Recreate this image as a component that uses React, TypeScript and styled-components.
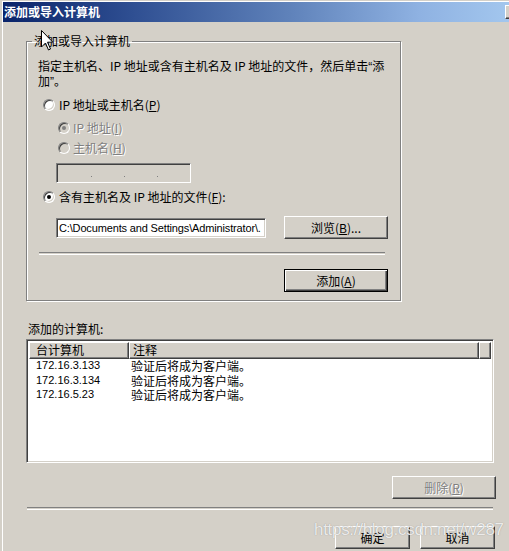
import React from "react";
import styled, { createGlobalStyle, css } from "styled-components";

const GlobalStyle = createGlobalStyle`
  html, body { margin: 0; padding: 0; background: #d4d0c8; overflow: hidden; }
  body { width: 509px; height: 551px; }
`;

const CJK = `"Noto Sans CJK SC", "Liberation Sans", sans-serif`;
const LAT = `"Liberation Sans", "Noto Sans CJK SC", sans-serif`;

const Window = styled.div`
  position: relative;
  width: 524px;
  height: 551px;
  box-sizing: border-box;
  background: #d4d0c8;
  border-top: 1px solid #d4d0c8;
  border-left: 2px solid #d4d0c8;
  box-shadow: inset 1px 1px 0 #ffffff;
  padding: 1px 0 0 1px;
  display: flex;
  flex-direction: column;
  font-family: ${CJK};
  font-size: 12px;
  color: #000;
`;

const TitleBar = styled.div`
  height: 20px;
  display: flex;
  align-items: center;
  justify-content: space-between;
  background: linear-gradient(to right, #0a246a 0%, #2f4f92 25%, #5f82ba 55%, #8fb2e2 80%, #a6caf0 100%);
`;

const TitleText = styled.span`
  padding-left: 1px;
  color: #fff;
  font-weight: bold;
  font-size: 12px;
  line-height: 14px;
`;

const CloseButton = styled.span`
  width: 16px;
  height: 14px;
  margin-right: 3px;
  box-sizing: border-box;
  background: #d4d0c8;
  border: 1px solid;
  border-color: #fff #404040 #404040 #fff;
  box-shadow: inset -1px -1px 0 #808080;
  display: flex;
  align-items: center;
  justify-content: center;
`;

const Content = styled.div`
  display: flex;
  flex-direction: column;
  align-items: flex-start;
  padding-left: 23px;
  width: 470px;
`;

const Group = styled.fieldset`
  margin: 12px 0 0 0;
  width: 375px;
  min-width: 0;
  box-sizing: border-box;
  border: 1px solid #808080;
  box-shadow: 1px 1px 0 #fff, inset 1px 1px 0 #fff;
  padding: 10px 12px 8px 11px;
  display: flex;
  flex-direction: column;
  align-items: flex-start;
`;

const Legend = styled.legend`
  padding: 0 2px;
  margin-left: -6px;
  line-height: 14px;
  font-size: 12px;
`;

const Desc = styled.div`
  line-height: 15px;
  height: 30px;
  white-space: nowrap;
`;

const Quote = styled.span`
  font-family: ${LAT};
  line-height: 0;
`;

const RadioRow = styled.label<{ $indent: number; $top: number; $gap: number }>`
  display: flex;
  align-items: center;
  height: 20px;
  gap: ${(p) => p.$gap}px;
  margin-left: ${(p) => p.$indent}px;
  margin-top: ${(p) => p.$top}px;
  white-space: nowrap;
  line-height: 14px;
`;

const RadioCircle = styled.span<{ $disabled?: boolean; $checked?: boolean }>`
  width: 12px;
  height: 12px;
  flex: none;
  box-sizing: border-box;
  border-radius: 50%;
  border: 1px solid;
  border-color: #808080 #fff #fff #808080;
  box-shadow: inset 1px 1px 0 #404040, inset -1px -1px 0 #d4d0c8;
  background: ${(p) => (p.$disabled ? "#d4d0c8" : "#fff")};
  display: flex;
  align-items: center;
  justify-content: center;
  &::after {
    content: "";
    width: 4px;
    height: 4px;
    border-radius: 50%;
    background: ${(p) => (p.$disabled ? "#808080" : "#000")};
    display: ${(p) => (p.$checked ? "block" : "none")};
  }
`;

const disabledText = css`
  color: #808080;
  text-shadow: 1px 1px 0 #fff;
`;

const Label = styled.span<{ $disabled?: boolean }>`
  ${(p) => p.$disabled && disabledText}
`;

const sunken = css`
  box-sizing: border-box;
  border: 1px solid;
  border-color: #808080 #fff #fff #808080;
  box-shadow: inset 1px 1px 0 #404040, inset -1px -1px 0 #d4d0c8;
`;

const IpBox = styled.div`
  ${sunken};
  width: 135px;
  height: 20px;
  margin: 5px 0 0 18px;
  background: #d4d0c8;
  display: flex;
  align-items: center;
  padding-left: 2px;
`;

const IpSegment = styled.span`
  width: 32px;
  height: 100%;
`;

const IpDot = styled.span`
  width: 1px;
  height: 1px;
  margin-top: 6px;
  background: #808080;
`;

const PathRow = styled.div`
  display: flex;
  align-items: center;
  margin: 9px 0 0 18px;
  gap: 18px;
`;

const PathInput = styled.div`
  ${sunken};
  width: 210px;
  height: 20px;
  background: #fff;
  font-family: ${LAT};
  font-size: 11px;
  letter-spacing: -0.15px;
  line-height: 16px;
  padding: 1px 0 0 2px;
  white-space: nowrap;
  overflow: hidden;
`;

const Button = styled.button<{ $w: number; $default?: boolean; $disabled?: boolean }>`
  width: ${(p) => p.$w}px;
  height: 23px;
  box-sizing: border-box;
  padding: 0;
  margin: 0;
  background: #d4d0c8;
  font-family: ${CJK};
  font-size: 12px;
  line-height: 14px;
  color: #000;
  border: 1px solid;
  border-color: #fff #404040 #404040 #fff;
  box-shadow: inset -1px -1px 0 #808080;
  ${(p) =>
    p.$default &&
    css`
      border-color: #000;
      box-shadow: inset 1px 1px 0 #fff, inset -1px -1px 0 #404040, inset -2px -2px 0 #808080;
    `}
  ${(p) => p.$disabled && disabledText}
`;

const Separator = styled.div<{ $w: number; $top: number; $left: number }>`
  width: ${(p) => p.$w}px;
  height: 1px;
  margin-top: ${(p) => p.$top}px;
  margin-left: ${(p) => p.$left}px;
  border-top: 1px solid #808080;
  border-bottom: 1px solid #fff;
`;

const ButtonRow = styled.div<{ $top: number; $right: number; $gap?: number }>`
  align-self: stretch;
  display: flex;
  justify-content: flex-end;
  gap: ${(p) => p.$gap ?? 0}px;
  margin-top: ${(p) => p.$top}px;
  margin-right: ${(p) => p.$right}px;
`;

const ListLabel = styled.div`
  margin: 20px 0 0 2px;
  line-height: 15px;
`;

const ListView = styled.div`
  ${sunken};
  margin-top: 3px;
  width: 468px;
  height: 124px;
  background: #fff;
  padding: 2px;
  display: flex;
  flex-direction: column;
`;

const HeaderRow = styled.div`
  display: flex;
  height: 17px;
  flex: none;
`;

const HeaderCell = styled.div<{ $w?: number; $pad: number }>`
  ${(p) => (p.$w ? `width: ${p.$w}px;` : "flex: 1;")}
  box-sizing: border-box;
  background: #d4d0c8;
  border: 1px solid;
  border-color: #fff #404040 #404040 #fff;
  box-shadow: inset -1px -1px 0 #808080;
  padding-left: ${(p) => p.$pad}px;
  line-height: 14px;
  white-space: nowrap;
  overflow: hidden;
`;

const Rows = styled.div`
  display: flex;
  flex-direction: column;
`;

const Row = styled.div`
  display: flex;
  height: 14.5px;
  line-height: 13px;
  align-items: flex-start;
  white-space: nowrap;
`;

const IpCell = styled.span`
  width: 100px;
  padding-left: 7px;
  box-sizing: border-box;
  font-family: ${LAT};
  font-size: 11px;
`;

const NoteCell = styled.span`
  padding-left: 2px;
  font-size: 12px;
`;

const Cursor = styled.svg`
  position: absolute;
  left: 39px;
  top: 29px;
`;

const Watermark = styled.div`
  position: absolute;
  left: 312px;
  top: 519px;
  font-family: ${LAT};
  font-size: 17px;
  letter-spacing: -0.3px;
  color: rgba(255, 255, 255, 0.82);
  text-shadow: 0 0 1px rgba(90, 90, 90, 0.6);
  pointer-events: none;
  white-space: nowrap;
`;

const rows = [
  { ip: "172.16.3.133", note: "验证后将成为客户端。" },
  { ip: "172.16.3.134", note: "验证后将成为客户端。" },
  { ip: "172.16.5.23", note: "验证后将成为客户端。" },
];

export default function App() {
  return (
    <>
      <GlobalStyle />
      <Window>
        <TitleBar>
          <TitleText>添加或导入计算机</TitleText>
          <CloseButton>
            <svg width="8" height="7" viewBox="0 0 8 7">
              <path d="M0 0 L2 0 L4 2 L6 0 L8 0 L5 3.5 L8 7 L6 7 L4 5 L2 7 L0 7 L3 3.5 Z" fill="#000" />
            </svg>
          </CloseButton>
        </TitleBar>
        <Content>
          <Group>
            <Legend>添加或导入计算机</Legend>
            <Desc>
              指定主机名、IP 地址或含有主机名及 IP 地址的文件，然后单击<Quote>“</Quote>添
              <br />
              加<Quote>”</Quote>。
            </Desc>
            <RadioRow $indent={5} $top={7} $gap={4}>
              <RadioCircle />
              <Label>
                IP 地址或主机名(<u>P</u>)
              </Label>
            </RadioRow>
            <RadioRow $indent={20} $top={3} $gap={3}>
              <RadioCircle $disabled $checked />
              <Label $disabled>
                IP 地址(<u>I</u>)
              </Label>
            </RadioRow>
            <RadioRow $indent={20} $top={0} $gap={3}>
              <RadioCircle $disabled />
              <Label $disabled>
                主机名(<u>H</u>)
              </Label>
            </RadioRow>
            <IpBox>
              <IpSegment />
              <IpDot />
              <IpSegment />
              <IpDot />
              <IpSegment />
              <IpDot />
            </IpBox>
            <RadioRow $indent={5} $top={4} $gap={4}>
              <RadioCircle $checked />
              <Label>
                含有主机名及 IP 地址的文件(<u>F</u>):
              </Label>
            </RadioRow>
            <PathRow>
              <PathInput>C:\Documents and Settings\Administrator\.</PathInput>
              <Button $w={104}>
                浏览(<u>B</u>)...
              </Button>
            </PathRow>
            <Separator $w={346} $top={13} $left={1} />
            <ButtonRow $top={14} $right={0}>
              <Button $w={104} $default>
                添加(<u>A</u>)
              </Button>
            </ButtonRow>
          </Group>
          <ListLabel>添加的计算机:</ListLabel>
          <ListView>
            <HeaderRow>
              <HeaderCell $w={100} $pad={6}>
                台计算机
              </HeaderCell>
              <HeaderCell $w={350} $pad={3}>
                注释
              </HeaderCell>
              <HeaderCell $pad={0} />
            </HeaderRow>
            <Rows>
              {rows.map((r) => (
                <Row key={r.ip}>
                  <IpCell>{r.ip}</IpCell>
                  <NoteCell>{r.note}</NoteCell>
                </Row>
              ))}
            </Rows>
          </ListView>
          <ButtonRow $top={13} $right={0}>
            <Button $w={104} $disabled>
              删除(<u>R</u>)
            </Button>
          </ButtonRow>
          <Separator $w={466} $top={8} $left={1} />
          <ButtonRow $top={16} $right={1} $gap={10}>
            <Button $w={75}>确定</Button>
            <Button $w={75}>取消</Button>
          </ButtonRow>
        </Content>
        <Cursor width="13" height="21" viewBox="0 0 13 21">
          <path d="M0.5 0.5 L0.5 17 L4.5 13 L7.5 20 L9.5 19 L6.5 12.2 L11.8 12.2 Z" fill="#fff" stroke="#000" strokeWidth="1" />
        </Cursor>
        <Watermark>https://blog.csdn.net/w287</Watermark>
      </Window>
    </>
  );
}
